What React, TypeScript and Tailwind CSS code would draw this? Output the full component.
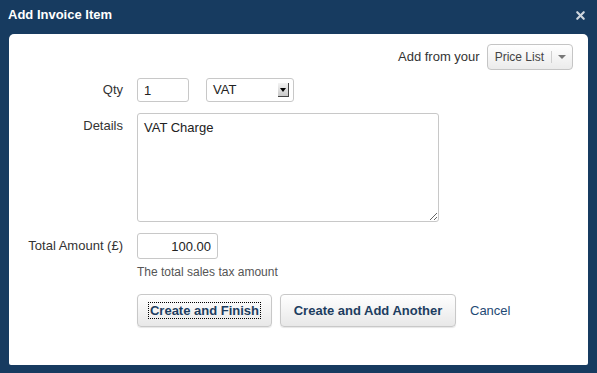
import { X } from "lucide-react";

export default function App() {
  return (
    <div className="w-[597px] h-[373px] bg-[#173b60] flex flex-col font-['Liberation_Sans',Arial,sans-serif] text-[13px] text-[#333]">
      <div className="h-[34px] flex items-start justify-between pl-[8px] pr-[10px] pt-[6px]">
        <h1 className="text-white font-bold text-[13px] leading-[18px]">Add Invoice Item</h1>
        <X size={13} strokeWidth={4} className="text-[#cdd5de] mt-[3px]" />
      </div>

      <div className="mx-[9px] h-[331px] bg-white rounded-t-[5px] rounded-b-[2px] pt-[10px] pr-[15px] flex flex-col">
        <div className="flex items-center justify-end gap-[7px]">
          <span className="text-[13px]">Add from your</span>
          <div className="h-[26px] flex items-stretch border border-[#c5c5c5] rounded-[4px] bg-gradient-to-b from-white to-[#ebebeb] text-[12px] text-[#444]">
            <span className="px-[7px] flex items-center">Price List</span>
            <span className="my-[6px] w-px bg-[#cfcfcf]" />
            <span className="w-[20px] flex items-center justify-center">
              <span className="border-x-[4px] border-x-transparent border-t-[4px] border-t-[#777]" />
            </span>
          </div>
        </div>

        <div className="grid grid-cols-[114px_1fr] gap-x-[14px] mt-[8px]">
          <label className="text-right leading-[24px]">Qty</label>
          <div className="flex gap-[17px]">
            <input
              defaultValue="1"
              className="w-[52px] h-[24px] border border-[#c8c8c8] rounded-[3px] px-[6px] text-[13px] text-[#222] outline-none"
            />
            <div className="w-[88px] h-[24px] border border-[#c8c8c8] rounded-[3px] flex items-center justify-between pl-[6px] pr-[4px] text-[#222]">
              <span>VAT</span>
              <span className="w-[11px] h-[14px] bg-gradient-to-b from-[#f4f4f4] to-[#c9c9c9] border-r border-b border-[#444] flex items-center justify-center">
                <span className="border-x-[3px] border-x-transparent border-t-[4px] border-t-black" />
              </span>
            </div>
          </div>

          <label className="text-right pt-[3px] mt-[11px]">Details</label>
          <textarea
            defaultValue="VAT Charge"
            className="mt-[11px] w-[302px] h-[109px] border border-[#c8c8c8] rounded-[3px] px-[6px] py-[4px] text-[13px] text-[#222] outline-none resize"
          />

          <label className="text-right leading-[26px] mt-[11px]">Total Amount (£)</label>
          <div className="mt-[11px]">
            <input
              defaultValue="100.00"
              className="w-[81px] h-[26px] border border-[#c8c8c8] rounded-[3px] px-[6px] text-right text-[13px] text-[#222] outline-none"
            />
            <p className="text-[12px] text-[#555] mt-[4px]">The total sales tax amount</p>
          </div>

          <div />
          <div className="flex items-center mt-[13px]">
            <button className="h-[33px] w-[135px] border border-[#c8c8c8] rounded-[4px] bg-gradient-to-b from-white to-[#e8e8e8] shadow-[0_1px_1px_rgba(0,0,0,0.1)] text-[13px] font-bold text-[#1c3d60]">
              <span className="outline-dotted outline-1 outline-black px-[1px]">Create and Finish</span>
            </button>
            <button className="ml-[8px] h-[33px] w-[176px] border border-[#c8c8c8] rounded-[4px] bg-gradient-to-b from-white to-[#e8e8e8] shadow-[0_1px_1px_rgba(0,0,0,0.1)] text-[13px] font-bold text-[#1c3d60]">
              Create and Add Another
            </button>
            <a className="ml-[14px] text-[13px] text-[#1f4a75]">Cancel</a>
          </div>
        </div>
      </div>
    </div>
  );
}
